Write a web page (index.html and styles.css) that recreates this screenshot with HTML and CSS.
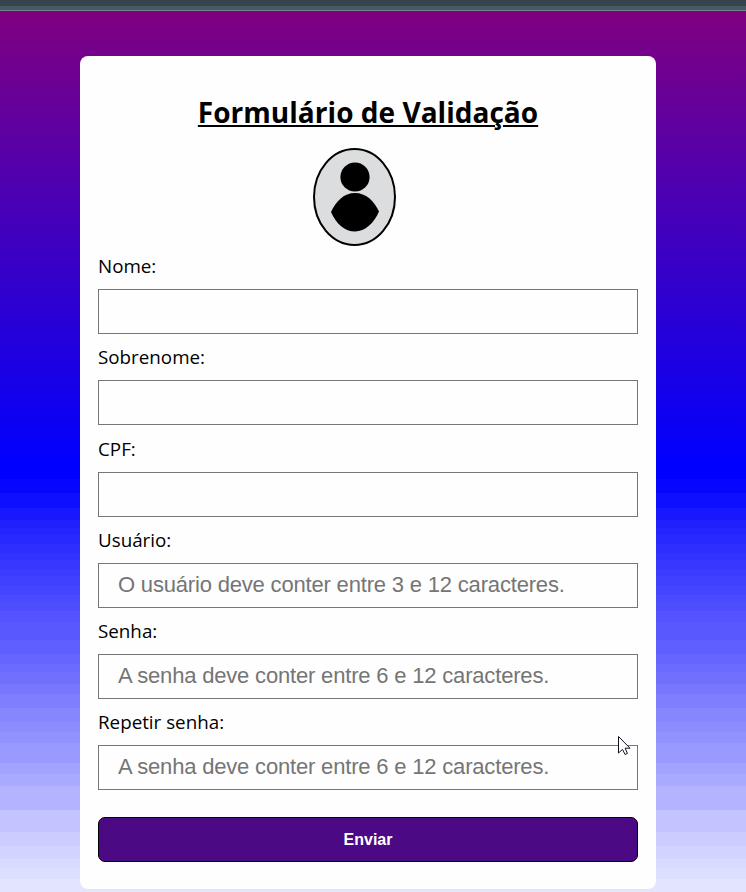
FILE: index.html
```
<!DOCTYPE html>
<html lang="pt-BR">
<head>
<meta charset="utf-8">
<title>Formulário de Validação</title>
<link rel="stylesheet" href="styles.css">
</head>
<body>
<div class="topbar"></div>
<main class="page">
  <form class="card" novalidate>
    <h1 class="title">Formulário de Validação</h1>
    <svg class="avatar" width="83" height="98" viewBox="0 0 83 98" aria-hidden="true">
      <ellipse cx="41.5" cy="49" rx="40.5" ry="48" fill="#dcddde" stroke="#000" stroke-width="2"/>
      <circle cx="42" cy="29" r="14.6"/>
      <path d="M18 64C23 53 31 45 42 45S61 53 66 63.500C61 75 52 83.500 42 83.500S23 76 18 64Z"/>
    </svg>
    <div class="field"><label for="nome">Nome:</label><input id="nome" type="text"></div>
    <div class="field"><label for="sobrenome">Sobrenome:</label><input id="sobrenome" type="text"></div>
    <div class="field"><label for="cpf">CPF:</label><input id="cpf" type="text"></div>
    <div class="field"><label for="usuario">Usuário:</label><input id="usuario" type="text" placeholder="O usuário deve conter entre 3 e 12 caracteres."></div>
    <div class="field"><label for="senha">Senha:</label><input id="senha" type="password" placeholder="A senha deve conter entre 6 e 12 caracteres."></div>
    <div class="field"><label for="repetir">Repetir senha:</label><input id="repetir" type="password" placeholder="A senha deve conter entre 6 e 12 caracteres."></div>
    <button class="submit" type="submit">Enviar</button>
  </form>
</main>
<svg class="cursor" width="13" height="20" viewBox="0 0 13 20" aria-hidden="true">
  <path d="M.5.500V17L4.500 13.400L7.100 18.500L9.400 17.400L7.100 12.200H12Z" fill="#fff" stroke="#101020"/>
</svg>
</body>
</html>
```
FILE: styles.css
```
* { box-sizing: border-box; }

html, body { height: 100%; }

body {
  margin: 0;
  overflow: hidden;
  position: relative;
  font-family: "Open Sans", "Liberation Sans", sans-serif;
  color: #000;
}

.topbar {
  height: 11px;
  background: linear-gradient(#37444c 0 6px, #445a64 6px 10px, #72868a 10px 11px);
}

/* Smooth purple to blue, then stepped bands from blue towards white */
.page {
  height: 881px;
  padding: 45px 90px 3px 80px;
  background: linear-gradient(
    #800080 0, #0000ff 454px, #0000ff 468px,
    #0606ff 468px 482px, #0f0fff 482px 497px, #1818ff 497px 509px,
    #2020ff 509px 517px, #2525ff 517px 524px, #2929ff 524px 533px,
    #2e2eff 533px 542px, #3333ff 542px 549px, #3737ff 549px 558px,
    #3c3cff 558px 565px, #4040ff 565px 575px, #4545ff 575px 584px,
    #4a4aff 584px 591px, #4e4eff 591px 600px, #5353ff 600px 611px,
    #5858ff 611px 629px, #5f5fff 629px 643px, #6565ff 643px 653px,
    #6b6bff 653px 661px, #7070ff 661px 673px, #7676ff 673px 683px,
    #7e7eff 683px 697px, #8686ff 697px 711px, #8c8cff 711px 721px,
    #9292ff 721px 732px, #9999ff 732px 752px, #a2a2ff 752px 763px,
    #a9a9ff 763px 775px, #b3b3ff 775px 799px, #c3c3ff 799px 821px,
    #cccdff 821px 835px, #d2d3ff 835px 848px, #d9daff 848px 857px,
    #dddfff 857px 868px, #e3e5ff 868px 881px);
}

.card {
  width: 576px;
  height: 833px;
  padding: 36px 18px 26px;
  border-radius: 8px;
  background: #fefefe;
  display: flex;
  flex-direction: column;
}

.title {
  flex: none;
  margin: 0;
  height: 56px;
  line-height: 40px;
  font-size: 28px;
  font-weight: 700;
  letter-spacing: 0.03px;
  text-align: center;
  text-decoration: underline;
  text-decoration-thickness: 2px;
  text-underline-offset: 2px;
}

.avatar {
  display: block;
  flex: none;
  margin: 0 0 0.2px 215px;
}

.field {
  flex: none;
  height: 91.2px;
  display: flex;
  flex-direction: column;
  font-size: 18.8px;
}

.field label {
  height: 43px;
  line-height: 40px;
}

.field input {
  width: 100%;
  height: 45px;
  padding: 0 19px 0.6px;
  border: 1px solid #767676;
  border-radius: 0;
  background: #fefefe;
  font: 22px "Liberation Sans", sans-serif;
  letter-spacing: -0.18px;
}

.field input::placeholder { color: #757575; opacity: 1; }

.submit {
  flex: none;
  width: 100%;
  height: 45px;
  margin-top: 23.8px;
  padding: 0;
  border: 1px solid #000;
  border-radius: 7px;
  background: #4b0984;
  color: #fff;
  font: bold 16px "Liberation Sans", sans-serif;
}

.cursor {
  position: absolute;
  left: 618px;
  top: 736px;
}
```
